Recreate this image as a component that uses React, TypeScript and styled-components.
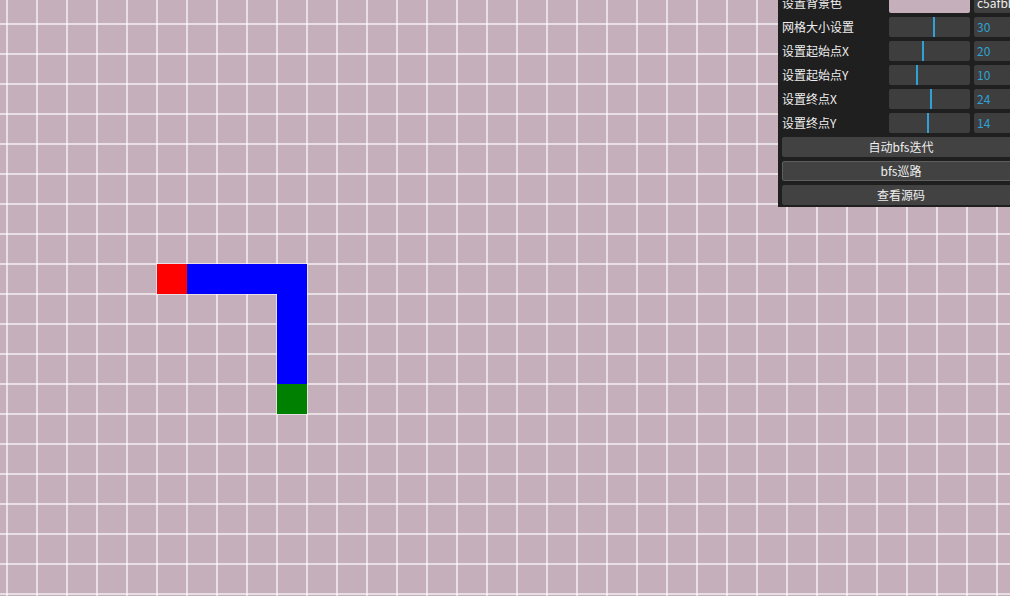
import React from "react";
import styled, { createGlobalStyle } from "styled-components";

const Global = createGlobalStyle`
  html, body { margin: 0; padding: 0; overflow: hidden; background: #c5afbb; }
  * { box-sizing: border-box; }
`;

const Stage = styled.div`
  position: relative;
  width: 1010px;
  height: 596px;
  overflow: hidden;
  background: #c5afbb;
  font-family: "Noto Sans CJK SC", "Noto Sans", sans-serif;
`;

const Canvas = styled.svg`
  display: block;
`;

const Panel = styled.div`
  position: absolute;
  top: -9px;
  left: 778px;
  width: 245px;
  padding: 2px 3px 2px 4px;
  background: #1f1f1f;
  display: flex;
  flex-direction: column;
  gap: 4px;
`;

const Row = styled.div`
  display: flex;
  align-items: center;
  height: 20px;
`;

const Label = styled.div`
  width: 107px;
  flex: none;
  color: #eeeeee;
  font-size: 12px;
  line-height: 20px;
  white-space: nowrap;
  overflow: hidden;
`;

const Controls = styled.div`
  display: flex;
  gap: 4px;
  flex: 1;
  height: 20px;
`;

const Track = styled.div<{ $swatch?: string }>`
  position: relative;
  width: 81px;
  height: 20px;
  flex: none;
  border-radius: 2px;
  background: ${(p) => p.$swatch ?? "#3e3e3e"};
`;

const Marker = styled.div`
  position: absolute;
  top: 0;
  width: 2px;
  height: 20px;
  background: #2fa1d6;
`;

const Field = styled.div<{ $accent?: boolean }>`
  flex: 1;
  height: 20px;
  border-radius: 2px;
  background: #3e3e3e;
  color: ${(p) => (p.$accent ? "#2fa1d6" : "#eeeeee")};
  font-size: 12px;
  line-height: 20px;
  padding-left: 3px;
  white-space: nowrap;
  overflow: hidden;
`;

const Button = styled.div<{ $focused?: boolean }>`
  height: 20px;
  border-radius: 2px;
  background: #424242;
  border: 1px solid ${(p) => (p.$focused ? "#5e5e5e" : "#424242")};
  color: #eeeeee;
  font-size: 12px;
  line-height: 18px;
  text-align: center;
`;

type SliderRow = { label: string; value: number; min: number; max: number };

const sliders: SliderRow[] = [
  { label: "网格大小设置", value: 30, min: 5, max: 51 },
  { label: "设置起始点X", value: 20, min: 1, max: 47 },
  { label: "设置起始点Y", value: 10, min: 0, max: 30 },
  { label: "设置终点X", value: 24, min: 1, max: 47 },
  { label: "设置终点Y", value: 14, min: 0, max: 30 },
];

const CELL = 30;
const OX = 7;
const OY = 24;

function Grid() {
  const vlines = [];
  for (let x = 6; x < 1010; x += CELL) vlines.push(x);
  const hlines = [];
  for (let y = 23; y < 596; y += CELL) hlines.push(y);
  const cell = (c: number, r: number, fill: string, key: string) => (
    <rect key={key} x={OX + c * CELL} y={OY + r * CELL} width={CELL} height={CELL} fill={fill} />
  );
  const path = [];
  for (let c = 6; c <= 9; c++) path.push(cell(c, 8, "#0000ff", `b${c}`));
  for (let r = 9; r <= 11; r++) path.push(cell(9, r, "#0000ff", `v${r}`));
  return (
    <Canvas width={1010} height={596} viewBox="0 0 1010 596">
      <rect width={1010} height={596} fill="#c5afbb" />
      {vlines.map((x) => (
        <rect key={`x${x}`} x={x} y={0} width={2} height={596} fill="#ffffff" fillOpacity={0.6} />
      ))}
      {hlines.map((y) => (
        <rect key={`y${y}`} x={0} y={y} width={1010} height={2} fill="#ffffff" fillOpacity={0.6} />
      ))}
      {path}
      {cell(5, 8, "#ff0000", "start")}
      {cell(9, 12, "#008000", "end")}
    </Canvas>
  );
}

export default function App() {
  return (
    <Stage>
      <Global />
      <Grid />
      <Panel>
        <Row>
          <Label>设置背景色</Label>
          <Controls>
            <Track $swatch="#c5afbb" />
            <Field>c5afbb</Field>
          </Controls>
        </Row>
        {sliders.map((s) => (
          <Row key={s.label}>
            <Label>{s.label}</Label>
            <Controls>
              <Track>
                <Marker style={{ left: `${Math.round(((s.value - s.min) / (s.max - s.min)) * 81)}px` }} />
              </Track>
              <Field $accent>{s.value}</Field>
            </Controls>
          </Row>
        ))}
        <Button>自动bfs迭代</Button>
        <Button $focused>bfs巡路</Button>
        <Button>查看源码</Button>
      </Panel>
    </Stage>
  );
}
